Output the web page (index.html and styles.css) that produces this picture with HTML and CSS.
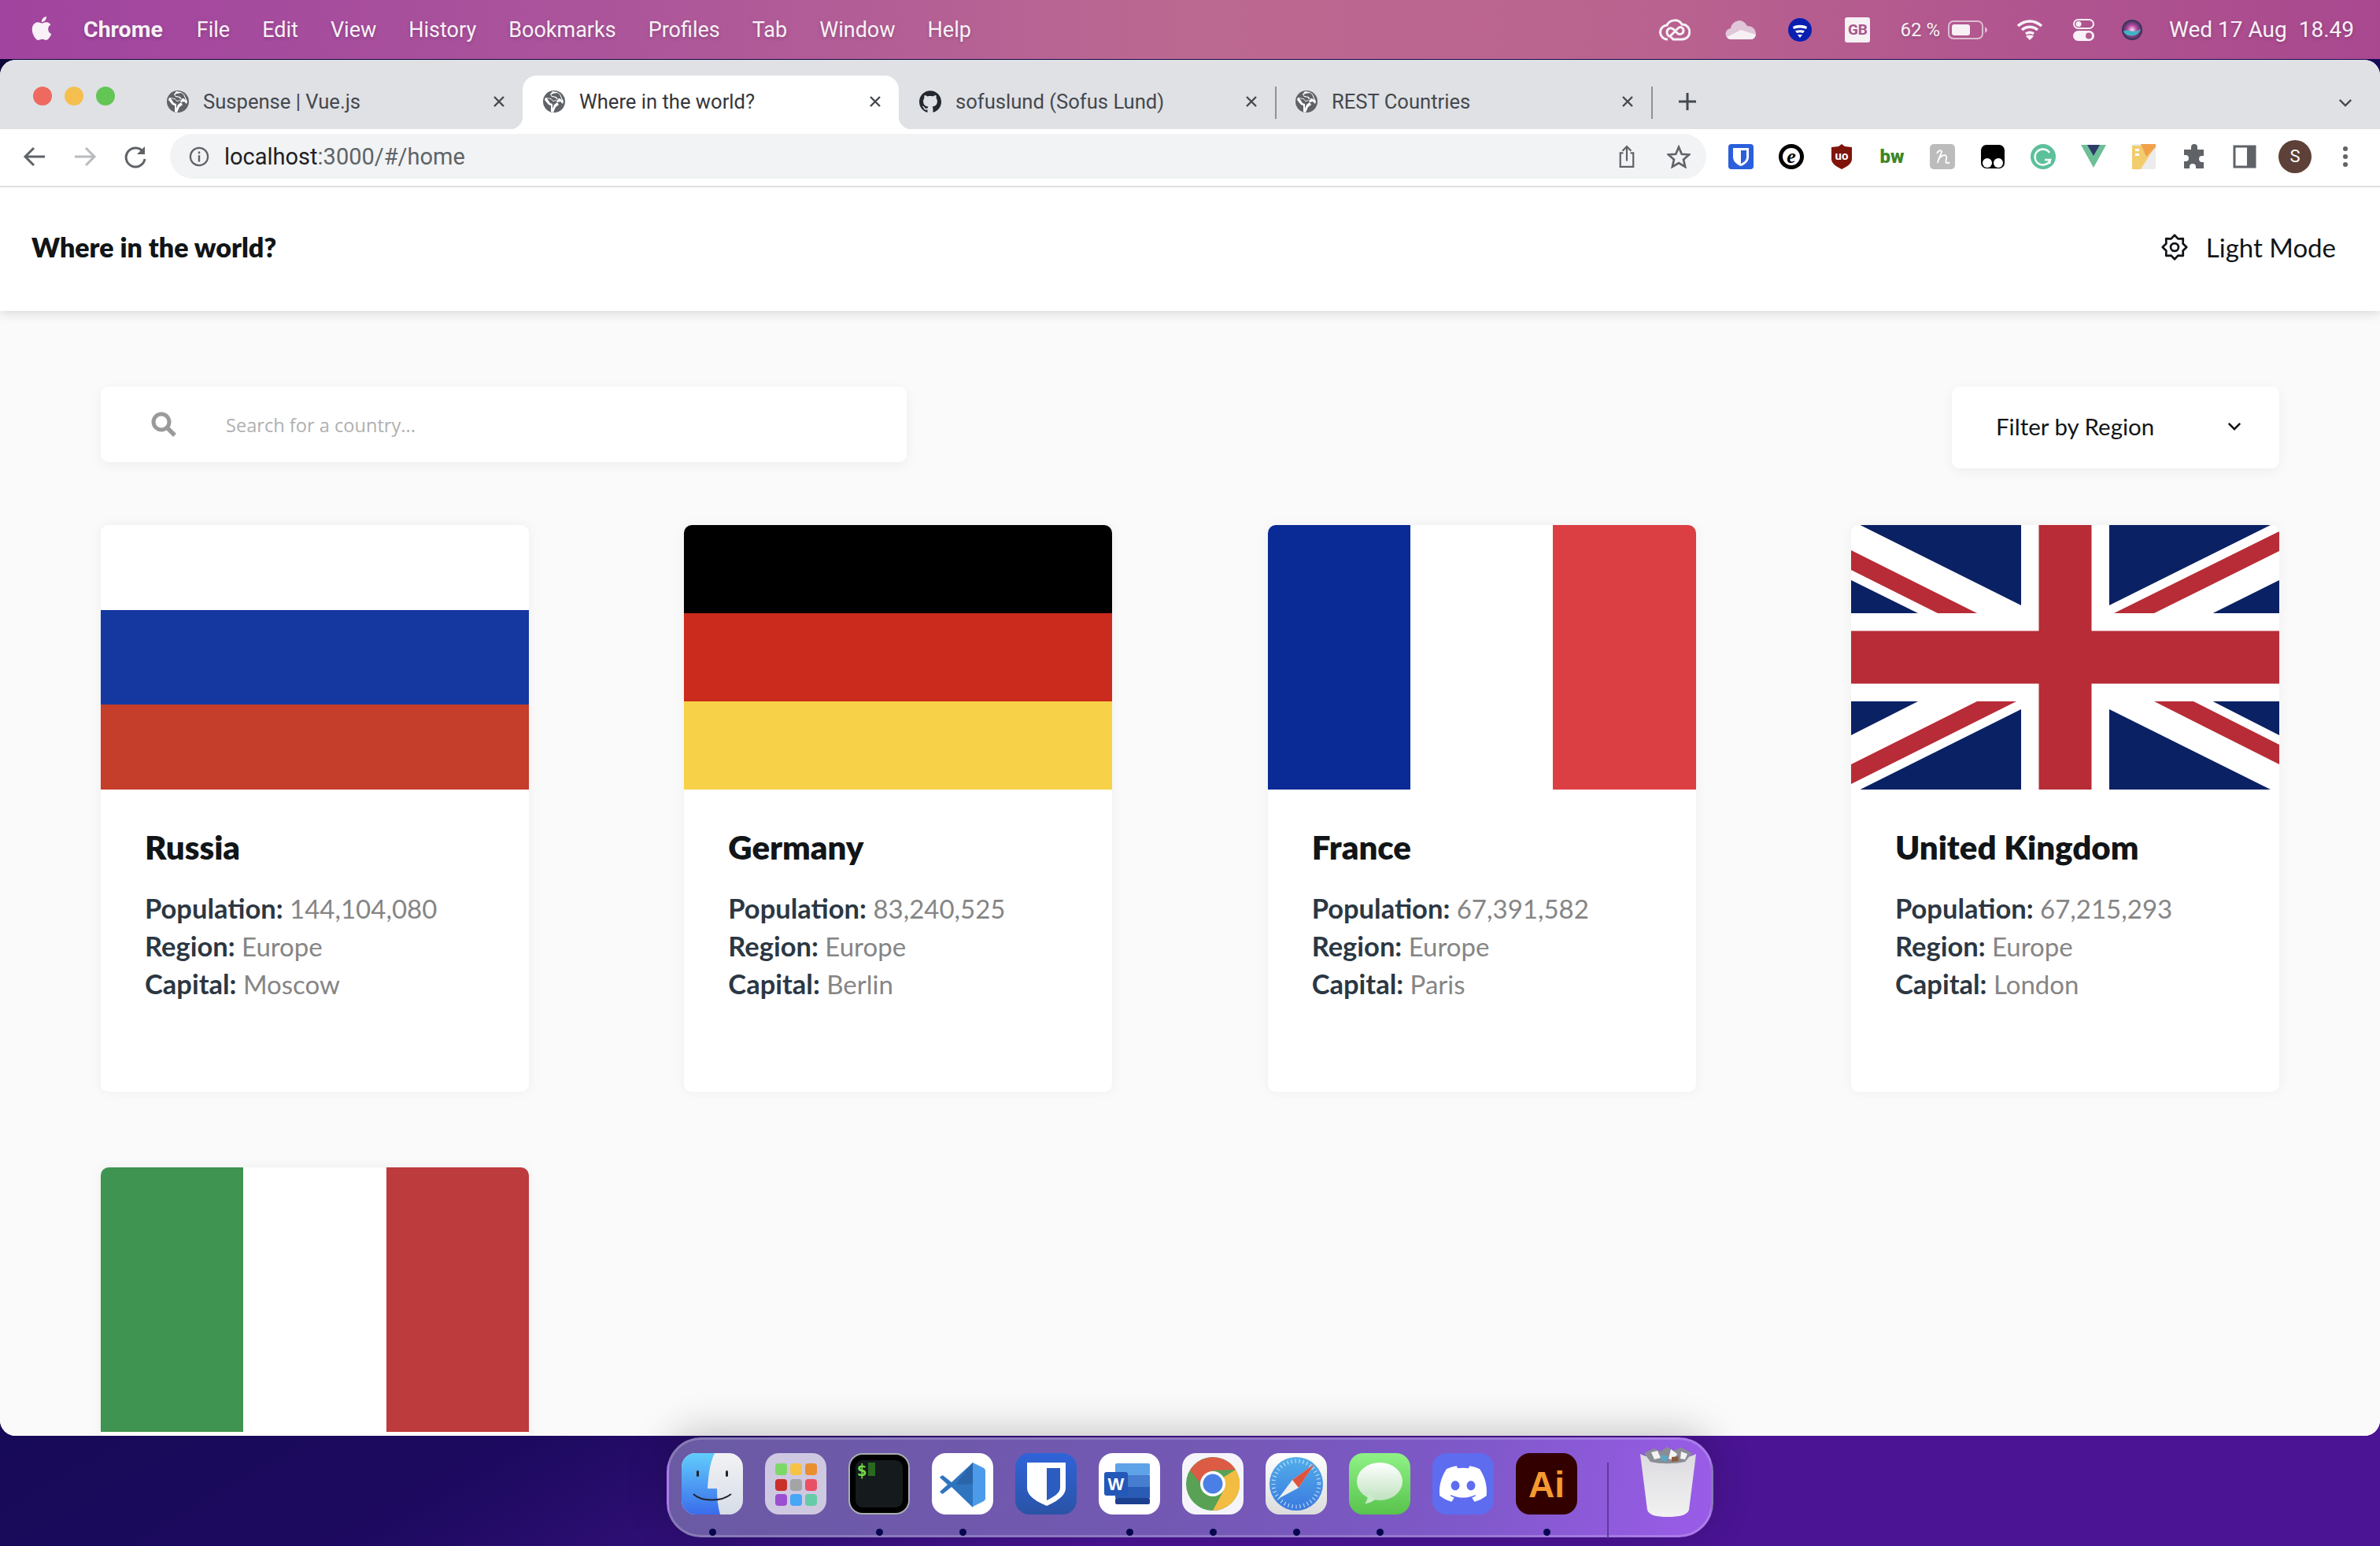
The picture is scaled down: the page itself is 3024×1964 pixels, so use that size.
FILE: index.html
```html
<!DOCTYPE html>
<html lang="en">
<head>
  <meta charset="UTF-8">
  <title>Where in the world?</title>
  <link rel="stylesheet" href="styles.css">
</head>
<body>
  <svg class="defs" width="0" height="0">
    <symbol id="globe" viewBox="0 0 28 28">
      <circle cx="14" cy="14" r="14" fill="#5f6368"/>
      <path d="M12 1 9 5l2 3 5 1 1 3-4 1-3-3-7-1-1 3 5 6 3 1v8l3 1 3-7 4-3-2-3 4-1 3 3 1-3-4-9-4-3z" fill="#fff"/>
      <path d="M12 4 10 6l2 1 5 1 2 4-6 2-3-3-5-1 4 6 3 1v6l2-5 4-3-2-4 5-1 3 2-3-7-3-2z" fill="#5f6368"/>
    </symbol>
    <symbol id="close" viewBox="0 0 20 20">
      <path d="M4 4l12 12M16 4 4 16" fill="none" stroke="#45484d" stroke-width="2.4"/>
    </symbol>
  </svg>

  <!-- mac menu bar -->
  <div class="menubar">
    <svg class="apple" viewBox="0 0 24 24"><path fill="#f8f1f7" d="M12.152 6.896c-.948 0-2.415-1.078-3.96-1.04-2.04.027-3.91 1.183-4.961 3.014-2.117 3.675-.546 9.103 1.519 12.09 1.013 1.454 2.208 3.09 3.792 3.039 1.52-.065 2.09-.987 3.935-.987 1.831 0 2.35.987 3.96.948 1.637-.026 2.676-1.48 3.676-2.948 1.156-1.688 1.636-3.325 1.662-3.415-.039-.013-3.182-1.221-3.22-4.857-.026-3.04 2.48-4.494 2.597-4.559-1.429-2.09-3.623-2.324-4.39-2.376-2-.156-3.675 1.09-4.61 1.09zM15.53 3.83c.843-1.012 1.4-2.427 1.245-3.83-1.207.052-2.662.805-3.532 1.818-.78.896-1.454 2.338-1.273 3.714 1.338.104 2.715-.688 3.559-1.701"/></svg>
    <span class="menu-app">Chrome</span>
    <span>File</span>
    <span>Edit</span>
    <span>View</span>
    <span>History</span>
    <span>Bookmarks</span>
    <span>Profiles</span>
    <span>Tab</span>
    <span>Window</span>
    <span>Help</span>

    <div class="status">
      <svg class="st-cc" width="40" height="30" viewBox="0 0 40 30"><path d="M11 27a9 9 0 0 1-1-18c4-8 15-8 19-1 13 0 13 19 0 19H18l-4-4 10-10c3-3 7-1 7 3s-5 6-8 3l-5-5c-4-3-8 0-8 4s3 6 6 5" fill="none" stroke="#f8f1f7" stroke-width="3"/></svg>
      <svg class="st-cloud" width="40" height="28" viewBox="0 0 40 28"><path d="M8 26a7 7 0 0 1-1-14c1-6 5-9 11-10 4 0 8 3 10 7 6 0 10 3 11 9 0 5-3 8-7 8z" fill="#dfc6d8"/><path d="M2 23 20 14l19 6c-1 4-3 6-7 6H8c-3 0-5-1-6-3z" fill="#f7f0f5"/></svg>
      <svg class="st-f" width="30" height="30" viewBox="0 0 30 30"><circle cx="15" cy="15" r="15" fill="#0a1fb0"/><path d="M6 11c5-3 13-3 18 0l-1 3c-5-2-11-2-16 0zM9 16c4-1 9-1 12 0l-2 3c-3-1-5-1-8 0zM12 21h6l-3 4z" fill="#fff"/></svg>
      <span class="st-gb">GB</span>
      <span class="st-pct">62 %</span>
      <svg class="st-batt" width="50" height="24" viewBox="0 0 50 24"><rect x="1" y="1" width="43" height="22" rx="6" fill="none" stroke="#dcbdd2" stroke-width="2"/><rect x="5" y="5" width="23" height="14" rx="3" fill="#f7f0f5"/><path d="M47 8c2 1 3 3 3 4s-1 3-3 4z" fill="#dcbdd2"/></svg>
      <svg class="st-wifi" width="32" height="26" viewBox="0 0 32 26"><path d="M1 8c9-8 21-8 30 0M6 13c6-5 14-5 20 0M11 18c3-2 7-2 10 0" fill="none" stroke="#f8f1f7" stroke-width="3.4"/><path d="M16 26l-5-5c3-2 7-2 10 0z" fill="#f8f1f7"/></svg>
      <svg class="st-ctl" width="27" height="28" viewBox="0 0 27 28"><rect x="1" y="1" width="25" height="11" rx="5.5" fill="none" stroke="#f8f1f7" stroke-width="2"/><circle cx="7" cy="6.5" r="3.5" fill="#f8f1f7"/><rect y="15" width="27" height="13" rx="6.5" fill="#f8f1f7"/><circle cx="20" cy="21.5" r="4" fill="#b65c90"/></svg>
      <svg class="st-siri" width="26" height="26" viewBox="0 0 26 26"><defs><radialGradient id="siri"><stop offset="0" stop-color="#e9e6f0"/><stop offset=".45" stop-color="#b94aa5"/><stop offset="1" stop-color="#2a2f4e"/></radialGradient></defs><circle cx="13" cy="13" r="13" fill="url(#siri)"/><path d="M2 15c6-5 10 4 22-3-2 9-17 12-22 3z" fill="#42b3c4"/></svg>
      <span class="st-date">Wed 17 Aug</span>
      <span class="st-time">18.49</span>
    </div>
  </div>

  <div class="window">
    <!-- tab strip -->
    <div class="tabstrip">
      <div class="lights"><i class="red"></i><i class="yellow"></i><i class="green"></i></div>
      <div class="tab">
        <svg class="favicon"><use href="#globe"/></svg>
        <span class="tab-title">Suspense | Vue.js</span>
        <svg class="tab-x"><use href="#close"/></svg>
      </div>
      <div class="tab active">
        <svg class="favicon"><use href="#globe"/></svg>
        <span class="tab-title">Where in the world?</span>
        <svg class="tab-x"><use href="#close"/></svg>
      </div>
      <div class="tab">
        <svg class="favicon" viewBox="0 0 24 24"><path fill="#24292f" d="M12 .297c-6.63 0-12 5.373-12 12 0 5.303 3.438 9.8 8.205 11.385.6.113.82-.258.82-.577 0-.285-.01-1.04-.015-2.04-3.338.724-4.042-1.61-4.042-1.61C4.422 18.07 3.633 17.7 3.633 17.7c-1.087-.744.084-.729.084-.729 1.205.084 1.838 1.236 1.838 1.236 1.07 1.835 2.809 1.305 3.495.998.108-.776.417-1.305.76-1.605-2.665-.3-5.466-1.332-5.466-5.93 0-1.31.465-2.38 1.235-3.22-.135-.303-.54-1.523.105-3.176 0 0 1.005-.322 3.3 1.23.96-.267 1.98-.399 3-.405 1.02.006 2.04.138 3 .405 2.28-1.552 3.285-1.23 3.285-1.23.645 1.653.24 2.873.12 3.176.765.84 1.23 1.91 1.23 3.22 0 4.61-2.805 5.625-5.475 5.92.42.36.81 1.096.81 2.22 0 1.606-.015 2.896-.015 3.286 0 .315.21.69.825.57C20.565 22.092 24 17.592 24 12.297c0-6.627-5.373-12-12-12"/></svg>
        <span class="tab-title">sofuslund (Sofus Lund)</span>
        <svg class="tab-x"><use href="#close"/></svg>
      </div>
      <div class="tab sep">
        <svg class="favicon"><use href="#globe"/></svg>
        <span class="tab-title">REST Countries</span>
        <svg class="tab-x"><use href="#close"/></svg>
      </div>
      <div class="tab-sep"></div>
      <svg class="tab-plus" viewBox="0 0 24 24"><path d="M12 1v22M1 12h22" stroke="#45484d" stroke-width="3"/></svg>
      <svg class="tab-more" viewBox="0 0 20 12"><path d="M2 2l8 8 8-8" fill="none" stroke="#45484d" stroke-width="2.6"/></svg>
    </div>

    <!-- toolbar -->
    <div class="toolbar">
      <svg class="nav" viewBox="0 0 32 32"><path d="M29 16H5M15 5 4 16l11 11" fill="none" stroke="#5f6368" stroke-width="3"/></svg>
      <svg class="nav" viewBox="0 0 32 32"><path d="M3 16h24M17 5l11 11-11 11" fill="none" stroke="#b9bbbe" stroke-width="3"/></svg>
      <svg class="nav" viewBox="0 0 32 32"><path d="M26 10a12 12 0 1 0 2 9" fill="none" stroke="#5f6368" stroke-width="3"/><path d="M28 3v10H18z" fill="#5f6368"/></svg>
      <div class="omnibox">
        <svg class="om-info" viewBox="0 0 28 28"><circle cx="14" cy="14" r="12" fill="none" stroke="#5f6368" stroke-width="2.4"/><path d="M14 12v9M14 7v3" stroke="#5f6368" stroke-width="2.6"/></svg>
        <span class="url"><b>localhost</b>:3000/#/home</span>
        <svg class="om-share" viewBox="0 0 24 32"><path d="M7 11H3v19h18V11h-4M12 22V3M6 8l6-6 6 6" fill="none" stroke="#5f6368" stroke-width="2.4"/></svg>
        <svg class="om-star" viewBox="0 0 32 32"><path d="M16 3l4 9.5 10 .8-7.6 6.600 2.300 9.900L16 24.600 7.300 29.800l2.300-9.900L2 13.300l10-.8z" fill="none" stroke="#5f6368" stroke-width="2.8"/></svg>
      </div>
      <div class="extensions">
        <svg viewBox="0 0 32 32"><rect width="32" height="32" rx="4" fill="#2b5fdc"/><path d="M6 5h20v12c0 5-5 9-10 11C11 26 6 22 6 17z" fill="#fff"/><path d="M16 8h7v9c0 3-3 6-7 8z" fill="#2b5fdc"/></svg>
        <svg viewBox="0 0 32 32"><circle cx="16" cy="16" r="16" fill="#000"/><circle cx="16" cy="16" r="11" fill="#fff"/><text x="16" y="24" class="ext-e">e</text></svg>
        <svg viewBox="0 0 32 32"><path d="M16 0l4 3 9 1v15c0 6-7 10-13 13C10 29 3 25 3 19V4l9-1z" fill="#7f1409"/><text x="16" y="20" class="ext-ub">uo</text></svg>
        <svg viewBox="0 0 32 32"><text x="16" y="24" class="ext-bw">bw</text></svg>
        <svg viewBox="0 0 32 32"><rect width="32" height="32" rx="5" fill="#bcbcbc"/><path d="M9 12c1-3 5-5 6-3 1 3-4 6-5 15M11 20c2-5 9-8 10-4 1 3-2 6 0 8 2 1 3 0 4-1" fill="none" stroke="#fff" stroke-width="1.8"/></svg>
        <svg viewBox="0 0 32 32"><rect x="1" y="1" width="30" height="30" rx="7" fill="#000"/><circle cx="9" cy="24" r="6" fill="#fff"/><circle cx="23" cy="24" r="6" fill="#fff"/></svg>
        <svg viewBox="0 0 32 32"><circle cx="16" cy="16" r="16" fill="#5cc09b"/><path d="M24 11a10 10 0 1 0 1 9h-7M25 20l-1 5" fill="none" stroke="#fff" stroke-width="2.4"/></svg>
        <svg viewBox="0 0 32 32"><path d="M0 1h32L16 30z" fill="#6cbf97"/><path d="M8 1h16L16 15z" fill="#2f3a69"/></svg>
        <svg viewBox="0 0 32 32"><rect x="1" width="30" height="32" rx="2" fill="#ececec"/><path d="M1 2h30L12 32H1z" fill="#f3cc6e"/><path d="M12 0h19v4L19 16z" fill="#f0a24a"/><path d="M5 6h5v3H5zM5 12h5v3H5z" fill="#fff"/></svg>
        <svg viewBox="0 0 32 32"><path d="M12 4a4 4 0 0 1 8 0v3h8v8h-2a4 4 0 0 0 0 8h2v8H18v-2a4 4 0 0 0-8 0v2H3V22h2a4 4 0 0 0 0-8H3V7h9z" fill="#5f6368"/></svg>
        <svg viewBox="0 0 32 32"><rect x="3" y="3" width="26" height="26" fill="none" stroke="#5f6368" stroke-width="3"/><rect x="19" y="3" width="10" height="26" fill="#5f6368"/></svg>
        <span class="avatar">S</span>
        <svg viewBox="0 0 32 32"><circle cx="16" cy="6" r="3" fill="#5f6368"/><circle cx="16" cy="16" r="3" fill="#5f6368"/><circle cx="16" cy="26" r="3" fill="#5f6368"/></svg>
      </div>
    </div>

    <!-- the page itself -->
    <div class="page">
      <header class="header">
        <h1>Where in the world?</h1>
        <div class="mode">
          <svg class="gear" viewBox="0 0 40 40"><path d="M20 3l4.900 5.200L32 8l-.200 7.100L37 20l-5.200 4.900L32 32l-7.100-.200L20 37l-4.900-5.200L8 32l.200-7.100L3 20l5.200-4.900L8 8l7.100.200z" fill="none" stroke="#111517" stroke-width="3" stroke-linejoin="round"/><circle cx="20" cy="20" r="5.5" fill="none" stroke="#111517" stroke-width="3"/></svg>
          <span>Light Mode</span>
        </div>
      </header>

      <main class="content">
        <div class="controls">
          <div class="search">
            <svg class="search-icon" viewBox="0 0 32 32"><circle cx="13" cy="13" r="10" fill="none" stroke="#9a9a9a" stroke-width="5"/><path d="M20 20l10 10" stroke="#9a9a9a" stroke-width="5.5"/></svg>
            <span class="placeholder">Search for a country...</span>
          </div>
          <div class="filter">
            <span>Filter by Region</span>
            <svg class="chevron" viewBox="0 0 20 12"><path d="M2 2l8 8 8-8" fill="none" stroke="#111517" stroke-width="3"/></svg>
          </div>
        </div>

        <div class="grid">
          <div class="card">
            <div class="flag flag-rows russia"><i></i><i></i><i></i></div>
            <div class="card-body">
              <h2>Russia</h2>
              <p><b>Population:</b> 144,104,080</p>
              <p><b>Region:</b> Europe</p>
              <p><b>Capital:</b> Moscow</p>
            </div>
          </div>
          <div class="card">
            <div class="flag flag-rows germany"><i></i><i></i><i></i></div>
            <div class="card-body">
              <h2>Germany</h2>
              <p><b>Population:</b> 83,240,525</p>
              <p><b>Region:</b> Europe</p>
              <p><b>Capital:</b> Berlin</p>
            </div>
          </div>
          <div class="card">
            <div class="flag flag-cols france"><i></i><i></i><i></i></div>
            <div class="card-body">
              <h2>France</h2>
              <p><b>Population:</b> 67,391,582</p>
              <p><b>Region:</b> Europe</p>
              <p><b>Capital:</b> Paris</p>
            </div>
          </div>
          <div class="card">
            <svg class="flag" viewBox="0 0 544 336">
              <rect width="544" height="336" fill="#fff"/>
              <g fill="#0a2164">
                <path d="M11.5 0H216v102zM0 70v42h85zM328 0h205L328 102zM544 70v42h-84.400zM0 224h85L0 267zM216 234v102H11.5zM328 234l205 102H328zM459.600 224H544v43z"/>
              </g>
              <g fill="#b72c36">
                <path d="M0 32v25l110 55h50zM334 112h51L544 33V8zM160 224h50L0 329v-25zM385 224h50l109 55v25z"/>
                <path d="M238.5 0h67v336h-67zM0 134.500h544v67H0z"/>
              </g>
            </svg>
            <div class="card-body">
              <h2>United Kingdom</h2>
              <p><b>Population:</b> 67,215,293</p>
              <p><b>Region:</b> Europe</p>
              <p><b>Capital:</b> London</p>
            </div>
          </div>
          <div class="card">
            <div class="flag flag-cols italy"><i></i><i></i><i></i></div>
            <div class="card-body"></div>
          </div>
        </div>
      </main>
    </div>
  </div>

  <!-- dock -->
  <div class="dock">
    <div class="dock-item">
      <svg viewBox="0 0 78 78"><defs><linearGradient id="fnL" x1="0" y1="0" x2="0" y2="1"><stop offset="0" stop-color="#62cdfb"/><stop offset="1" stop-color="#3a6ceb"/></linearGradient><linearGradient id="fnR" x1="0" y1="0" x2="0" y2="1"><stop offset="0" stop-color="#f2f2f4"/><stop offset="1" stop-color="#d6dde8"/></linearGradient></defs><rect width="78" height="78" rx="18" fill="url(#fnR)"/><path d="M18 0h24C36 12 34 28 33 45h12c0 12 1 23 4 33H18A18 18 0 0 1 0 60V18A18 18 0 0 1 18 0z" fill="url(#fnL)"/><rect x="19" y="22" width="3" height="8" rx="1.5" fill="#20242c"/><rect x="56" y="22" width="3" height="8" rx="1.5" fill="#20242c"/><path d="M15 52c10 10 36 10 48 0" fill="none" stroke="#20242c" stroke-width="1.8"/></svg>
      <i class="dot"></i>
    </div>
    <div class="dock-item">
      <svg viewBox="0 0 78 78"><rect width="78" height="78" rx="18" fill="#cfc8e1"/><g class="pad"><rect x="13" y="13" width="15" height="15" rx="4" fill="#7dd966"/><rect x="32" y="13" width="15" height="15" rx="4" fill="#f6c344"/><rect x="51" y="13" width="15" height="15" rx="4" fill="#e98f30"/><rect x="13" y="33" width="15" height="15" rx="4" fill="#c93128"/><rect x="32" y="33" width="15" height="15" rx="4" fill="#a2a4a6"/><rect x="51" y="33" width="15" height="15" rx="4" fill="#ea5065"/><rect x="13" y="52" width="15" height="15" rx="4" fill="#9a4fd0"/><rect x="32" y="52" width="15" height="15" rx="4" fill="#47a6f6"/><rect x="51" y="52" width="15" height="15" rx="4" fill="#66cba8"/></g></svg>
    </div>
    <div class="dock-item">
      <svg viewBox="0 0 78 78"><rect width="78" height="78" rx="18" fill="#a9aeb0"/><rect x="2" y="2" width="74" height="74" rx="16" fill="#000"/><rect x="9" y="9" width="60" height="60" rx="9" fill="#151b1d"/><text x="17" y="29" class="term">$</text><rect x="25" y="12" width="9" height="17" fill="#2a6a20"/></svg>
      <i class="dot"></i>
    </div>
    <div class="dock-item">
      <svg viewBox="0 0 78 78"><rect width="78" height="78" rx="18" fill="#fff"/><path d="M52 12 25 37 15 29c-1-1-2-1-3 0l-2 2 10 9-10 9 2 2c1 1 2 1 3 0l10-8 27 26z" fill="#2f74bf"/><path d="M52 12v27L30 40z" fill="#2965a8"/><path d="M52 12l14 7c1 1 2 2 2 3v36c0 1-1 2-2 3l-14 7z" fill="#4c9beb"/></svg>
      <i class="dot"></i>
    </div>
    <div class="dock-item">
      <svg viewBox="0 0 78 78"><defs><linearGradient id="bwBg" x1="0" y1="0" x2="0" y2="1"><stop offset="0" stop-color="#2f63d9"/><stop offset="1" stop-color="#2a53a6"/></linearGradient></defs><rect width="78" height="78" rx="18" fill="url(#bwBg)"/><path d="M15 12h49v32c0 11-13 18-24 23C28 62 15 55 15 44z" fill="#fff"/><path d="M40 19h17v25c0 7-9 12-17 16z" fill="#2b5cc0"/></svg>
    </div>
    <div class="dock-item">
      <svg viewBox="0 0 78 78"><rect width="78" height="78" rx="18" fill="#fff"/><rect x="21" y="13" width="44" height="15" rx="2" fill="#5ea3e8"/><rect x="21" y="28" width="44" height="15" fill="#467dcf"/><rect x="21" y="43" width="44" height="14" fill="#2a5bb5"/><rect x="21" y="57" width="44" height="8" rx="2" fill="#1d3f90"/><rect x="7" y="24" width="30" height="30" rx="3" fill="#2357b8"/><text x="22" y="47" class="word">W</text></svg>
      <i class="dot"></i>
    </div>
    <div class="dock-item">
      <svg viewBox="0 0 78 78"><rect width="78" height="78" rx="18" fill="#f5f4fa"/><circle cx="39" cy="39" r="34" fill="#58a155"/><path d="M10 22a34 34 0 0 1 58-1L39 22l-13 9-2 8z" fill="#dc5b45"/><path d="M68 21a34 34 0 0 1-29 52l14-26-1-16z" fill="#f2bd42"/><circle cx="39" cy="39" r="16" fill="#fff"/><circle cx="39" cy="39" r="12.5" fill="#4a80e6"/></svg>
      <i class="dot"></i>
    </div>
    <div class="dock-item">
      <svg viewBox="0 0 78 78"><defs><linearGradient id="sfBg" x1="0" y1="0" x2="0" y2="1"><stop offset="0" stop-color="#fff"/><stop offset="1" stop-color="#dcdcdc"/></linearGradient><linearGradient id="sfC" x1="0" y1="0" x2="0" y2="1"><stop offset="0" stop-color="#52aee9"/><stop offset="1" stop-color="#3a79e0"/></linearGradient></defs><rect width="78" height="78" rx="18" fill="url(#sfBg)"/><circle cx="39" cy="39" r="34" fill="url(#sfC)"/><circle cx="39" cy="39" r="29" fill="none" stroke="#cfe4f8" stroke-width="5" stroke-dasharray="1 4"/><path d="M16 58 34 34l28-20-20 30z" fill="#eee"/><path d="M62 14 34 34l8 10z" fill="#dd5440"/></svg>
      <i class="dot"></i>
    </div>
    <div class="dock-item">
      <svg viewBox="0 0 78 78"><defs><linearGradient id="msBg" x1="0" y1="0" x2="0" y2="1"><stop offset="0" stop-color="#8ff286"/><stop offset="1" stop-color="#58c34c"/></linearGradient><linearGradient id="msB" x1="0" y1="0" x2="0" y2="1"><stop offset="0" stop-color="#fff"/><stop offset="1" stop-color="#bfe2bf"/></linearGradient></defs><rect width="78" height="78" rx="18" fill="url(#msBg)"/><ellipse cx="39" cy="36" rx="29" ry="24" fill="url(#msB)"/><path d="M24 52c0 6-2 10-4 12 4 0 10-2 14-6z" fill="#cdeacd"/></svg>
      <i class="dot"></i>
    </div>
    <div class="dock-item">
      <svg viewBox="0 0 78 78"><rect width="78" height="78" rx="18" fill="#5e6cf0"/><g transform="translate(9 9) scale(2.5)"><path fill="#fff" d="M20.317 4.3698a19.7913 19.7913 0 00-4.8851-1.5152.0741.0741 0 00-.0785.0371c-.211.3753-.4447.8648-.6083 1.2495-1.8447-.2762-3.68-.2762-5.4868 0-.1636-.3933-.4058-.8742-.6177-1.2495a.077.077 0 00-.0785-.037 19.7363 19.7363 0 00-4.8852 1.515.0699.0699 0 00-.0321.0277C.5334 9.0458-.319 13.5799.0992 18.0578a.0824.0824 0 00.0312.0561c2.0528 1.5076 4.0413 2.4228 5.9929 3.0294a.0777.0777 0 00.0842-.0276c.4616-.6304.8731-1.2952 1.226-1.9942a.076.076 0 00-.0416-.1057c-.6528-.2476-1.2743-.5495-1.8722-.8923a.077.077 0 01-.0076-.1277c.1258-.0943.2517-.1923.3718-.2914a.0743.0743 0 01.0776-.0105c3.9278 1.7933 8.18 1.7933 12.0614 0a.0739.0739 0 01.0785.0095c.1202.099.246.1981.3728.2924a.077.077 0 01-.0066.1276 12.2986 12.2986 0 01-1.873.8914.0766.0766 0 00-.0407.1067c.3604.698.7719 1.3628 1.225 1.9932a.076.076 0 00.0842.0286c1.961-.6067 3.9495-1.5219 6.0023-3.0294a.077.077 0 00.0313-.0552c.5004-5.177-.8382-9.6739-3.5485-13.6604a.061.061 0 00-.0312-.0286zM8.02 15.3312c-1.1825 0-2.1569-1.0857-2.1569-2.419 0-1.3332.9555-2.4189 2.157-2.4189 1.2108 0 2.1757 1.0952 2.1568 2.419 0 1.3332-.9555 2.4189-2.1569 2.4189zm7.9748 0c-1.1825 0-2.1569-1.0857-2.1569-2.419 0-1.3332.9554-2.4189 2.1569-2.4189 1.2108 0 2.1757 1.0952 2.1568 2.419 0 1.3332-.946 2.4189-2.1568 2.4189z"/></g></svg>
    </div>
    <div class="dock-item">
      <svg viewBox="0 0 78 78"><rect width="78" height="78" rx="18" fill="#330000"/><text x="39" y="56" class="ai">Ai</text></svg>
      <i class="dot"></i>
    </div>
    <div class="dock-divider"></div>
    <div class="dock-item trash">
      <svg viewBox="0 0 71 92"><defs><linearGradient id="trBg" x1="0" y1="0" x2="0" y2="1"><stop offset="0" stop-color="#dcdadf"/><stop offset="1" stop-color="#f2f2f2"/></linearGradient></defs><path d="M0 10c14 8 57 8 71 0l-9 71c-2 7-13 9-27 9S11 88 9 81z" fill="url(#trBg)"/><path d="M5 9 18 3l8 4 8-6 8 5 10-4 14 7-9 11c-14 3-30 3-44 0z" fill="#8b8d94"/><path d="M14 8l8-2 4 9-8 2zM39 4l8 6-4 8-7-2zM52 7l8 3-3 7-6-1z" fill="#f3f3f3"/><path d="M27 11l8 2-2 7-7-2z" fill="#5aa8c8"/><path d="M40 14l8-1 1 6-9 1z" fill="#8a5a3c"/></svg>
    </div>
  </div>
</body>
</html>
```

FILE: styles.css
```css
* {
  box-sizing: border-box;
}

html, body {
  margin: 0;
  width: 3024px;
  height: 1964px;
  overflow: hidden;
}

body {
  display: flex;
  flex-direction: column;
  font-family: "Lato", "Noto Sans", sans-serif;
  background:
    linear-gradient(150deg, #0d0736 0%, #120a50 40%, #1d0a60 60%, rgba(29, 10, 96, 0) 75%),
    #4a1494;
}

.defs {
  position: absolute;
}

/* menu bar */
.menubar {
  display: flex;
  align-items: center;
  height: 75px;
  flex: none;
  padding-left: 38px;
  gap: 41px;
  color: #f8f1f7;
  font-family: "Roboto", sans-serif;
  font-size: 27px;
  background: linear-gradient(90deg, #a0449f 0%, #ac549b 25%, #bc6991 50%, #b9628f 70%, #ae518f 90%, #a9488f 100%);
  text-shadow: 0 2px 4px rgba(0, 0, 0, 0.2);
}

.apple {
  width: 30px;
  height: 34px;
  margin-right: -3px;
  margin-top: -4px;
}

.menu-app {
  margin-right: 2px;
  font-size: 28.5px;
  font-weight: 700;
}

.status {
  display: flex;
  align-items: center;
  margin-left: auto;
  padding-right: 33px;
}

.st-cc { margin-right: 44px; }
.st-cloud { margin-right: 40px; }
.st-f { margin-right: 42px; }
.st-gb {
  width: 32px;
  height: 32px;
  margin-right: 38px;
  line-height: 32px;
  text-align: center;
  border-radius: 3px;
  background: #f7f0f5;
  color: #a8548a;
  font-size: 19px;
  font-weight: 700;
  text-shadow: none;
}
.st-pct { margin-right: 10px; font-size: 24px; }
.st-batt { margin-right: 38px; }
.st-wifi { margin-right: 39px; }
.st-ctl { margin-right: 35px; }
.st-siri { margin-right: 34px; }
.st-date { margin-right: 15px; font-size: 28px; }
.st-time { font-size: 28px; }

/* browser window */
.window {
  display: flex;
  flex-direction: column;
  height: 1748px;
  margin-top: 1px;
  flex: none;
  border-radius: 20px;
  overflow: hidden;
  background: #fafafa;
}

.tabstrip {
  display: flex;
  align-items: flex-end;
  height: 88px;
  flex: none;
  background: #dfe1e5;
}

.lights {
  display: flex;
  align-self: center;
  gap: 16px;
  width: 186px;
  padding-left: 42px;
  margin-top: 4px;
}

.lights i {
  width: 24px;
  height: 24px;
  border-radius: 50%;
}

.red { background: #ee6a5f; }
.yellow { background: #f5bf4f; }
.green { background: #62c554; }

.tab {
  position: relative;
  display: flex;
  align-items: center;
  width: 478px;
  height: 68px;
  padding: 0 26px 3px;
  color: #45484d;
  font-family: "Roboto", sans-serif;
  font-size: 25.6px;
}

.tab.active {
  background: #fff;
  color: #35363a;
  border-radius: 18px 18px 0 0;
}

.tab.active::before,
.tab.active::after {
  content: "";
  position: absolute;
  bottom: 0;
  width: 16px;
  height: 16px;
}

.tab.active::before {
  left: -16px;
  background: radial-gradient(circle at 0 0, transparent 16px, #fff 16.5px);
}

.tab.active::after {
  right: -16px;
  background: radial-gradient(circle at 100% 0, transparent 16px, #fff 16.5px);
}

.tab.sep::before {
  content: "";
  position: absolute;
  left: 0;
  top: 14px;
  height: 41px;
  border-left: 2px solid #8e9196;
}

.favicon {
  width: 28px;
  height: 28px;
  flex: none;
  margin-right: 18px;
}

.tab-title {
  flex: 1;
  white-space: nowrap;
  overflow: hidden;
}

.tab-x {
  width: 20px;
  height: 20px;
  flex: none;
  margin-right: -6px;
}

.tab-sep {
  align-self: flex-end;
  width: 2px;
  height: 41px;
  margin-bottom: 13px;
  background: #8e9196;
}

.tab-plus {
  width: 24px;
  height: 24px;
  margin: 0 0 23px 32px;
}

.tab-more {
  width: 18px;
  height: 11px;
  margin: 0 35px 28px auto;
}

.toolbar {
  display: flex;
  align-items: center;
  height: 74px;
  flex: none;
  padding: 0 0 3px 28px;
  background: #fff;
  border-bottom: 2px solid #dedfe0;
}

.nav {
  width: 32px;
  height: 32px;
  margin-right: 32px;
}

.omnibox {
  display: flex;
  align-items: center;
  width: 1952px;
  height: 57px;
  margin-left: -4px;
  padding: 0 20px 0 24px;
  border-radius: 29px;
  background: #f1f3f4;
}

.om-info {
  width: 26px;
  height: 26px;
  margin-right: 19px;
}

.url {
  flex: 1;
  color: #5f6368;
  font-family: "Roboto", sans-serif;
  font-size: 29px;
}

.url b {
  color: #202124;
  font-weight: 400;
}

.om-share {
  width: 22px;
  height: 30px;
  margin-right: 40px;
}

.om-star {
  width: 30px;
  height: 30px;
}

.extensions {
  display: flex;
  align-items: center;
  gap: 32px;
  margin-left: 28px;
}

.extensions svg {
  width: 32px;
  height: 32px;
}

.extensions text {
  text-anchor: middle;
}

.ext-e {
  font: italic 700 26px "Liberation Serif", serif;
  fill: #000;
}

.ext-ub {
  font: 700 15px "Roboto", sans-serif;
  fill: #fff;
}

.ext-bw {
  font: 900 24px "Roboto", sans-serif;
  fill: #3c8527;
}

.avatar {
  width: 42px;
  height: 42px;
  margin: 0 -5px;
  line-height: 42px;
  text-align: center;
  border-radius: 50%;
  background: #5d4037;
  color: #fff;
  font-family: "Roboto", sans-serif;
  font-size: 22px;
}

/* page */
.page {
  flex: 1;
  overflow: hidden;
  background: #fafafa;
}

.header {
  position: relative;
  display: flex;
  align-items: center;
  justify-content: space-between;
  height: 157px;
  padding: 0 56px 6px 40px;
  background: #fff;
  box-shadow: 0 4px 12px rgba(0, 0, 0, 0.12);
}

.header h1 {
  margin: 0;
  color: #111517;
  font-size: 34px;
  font-weight: 800;
}

.mode {
  display: flex;
  align-items: center;
  gap: 22px;
  color: #111517;
  font-size: 33px;
}

.gear {
  width: 36px;
  height: 36px;
}

.content {
  padding: 96px 128px 0;
}

.controls {
  display: flex;
  justify-content: space-between;
  align-items: flex-start;
  margin-bottom: 72px;
}

.search {
  display: flex;
  align-items: center;
  width: 1024px;
  height: 96px;
  padding: 1px 0 0 64px;
  border-radius: 10px;
  background: #fff;
  box-shadow: 0 4px 16px rgba(0, 0, 0, 0.05);
}

.search-icon {
  width: 32px;
  height: 32px;
  margin: -2px 63px 0 0;
}

.placeholder {
  color: #b0b0b0;
  font-family: "Open Sans", sans-serif;
  font-size: 23.6px;
}

.filter {
  display: flex;
  align-items: center;
  justify-content: space-between;
  width: 416px;
  height: 104px;
  padding: 0 48px 4px 56px;
  border-radius: 10px;
  background: #fff;
  color: #111517;
  font-size: 29.5px;
  box-shadow: 0 4px 16px rgba(0, 0, 0, 0.05);
}

.chevron {
  width: 18px;
  height: 11px;
}

.grid {
  display: grid;
  grid-template-columns: repeat(4, 544px);
  justify-content: space-between;
  row-gap: 96px;
}

.card {
  height: 720px;
  border-radius: 10px;
  overflow: hidden;
  background: #fff;
  box-shadow: 0 0 16px rgba(0, 0, 0, 0.05);
}

.flag {
  display: flex;
  width: 544px;
  height: 336px;
}

.flag-rows {
  flex-direction: column;
}

.flag i {
  flex: 1;
}

.russia i:nth-child(1) { flex: 108; background: #fff; }
.russia i:nth-child(2) { flex: 120; background: #1537a0; }
.russia i:nth-child(3) { flex: 108; background: #c53d2b; }

.germany i:nth-child(1) { background: #000; }
.germany i:nth-child(2) { background: #cb2b1c; }
.germany i:nth-child(3) { background: #f7d147; }

.france i:nth-child(1) { background: #0a2a95; }
.france i:nth-child(2) { background: #fff; }
.france i:nth-child(3) { background: #db3f43; }

.italy i:nth-child(1) { background: #3f9451; }
.italy i:nth-child(2) { background: #fff; }
.italy i:nth-child(3) { background: #bd3b3d; }

.card-body {
  padding: 46px 56px;
}

.card-body h2 {
  margin: 0 0 27px;
  color: #111517;
  font-size: 42px;
  line-height: 54px;
  font-weight: 800;
}

.card-body p {
  margin: 0;
  color: #858585;
  font-size: 33px;
  line-height: 48px;
}

.card-body b {
  color: #2b3743;
  font-size: 34.5px;
  font-weight: 700;
}

/* dock */
.dock {
  display: flex;
  align-self: center;
  align-items: flex-start;
  gap: 28px;
  height: 127px;
  margin-top: 2px;
  padding: 17px 19px 0 16px;
  flex: none;
  border: 3px solid rgba(255, 255, 255, 0.2);
  border-radius: 44px;
  background: linear-gradient(100deg, #6a5aa3 0%, #7358b4 50%, #7e58c8 75%, #9a5ce8 100%);
  box-shadow: 0 -8px 50px rgba(0, 0, 0, 0.22);
}

.dock-item {
  display: flex;
  flex-direction: column;
  align-items: center;
  width: 78px;
}

.dock-item svg {
  width: 78px;
  height: 78px;
}

.dot {
  width: 9px;
  height: 9px;
  margin-top: 18px;
  border-radius: 50%;
  background: #07064f;
}

.dock-divider {
  width: 2px;
  height: 96px;
  margin: 12px 0 0 10px;
  background: #5e3a9e;
}

.trash {
  width: 71px;
  margin: -9px 0 0 12px;
}

.dock-item.trash svg {
  width: 71px;
  height: 92px;
}

.dock text {
  text-anchor: middle;
}

.term {
  font: 700 22px "DejaVu Sans Mono", monospace;
  fill: #6fd94a;
}

.word {
  font: 700 22px "Liberation Sans", sans-serif;
  fill: #fff;
}

.ai {
  font: 700 46px "Liberation Sans", sans-serif;
  fill: #f59a2f;
}
```
